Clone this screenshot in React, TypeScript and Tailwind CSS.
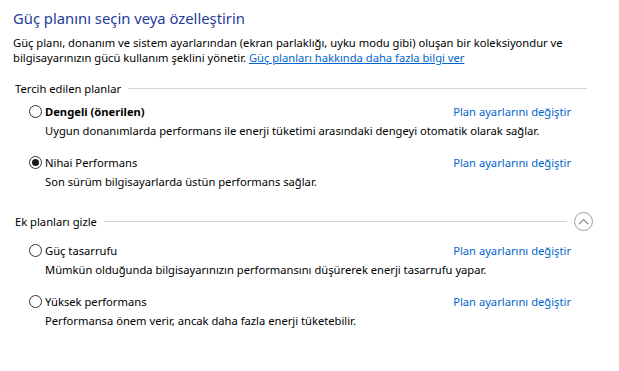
import React from 'react'

/* ── Radio ─────────────────────────────────────────────────── */
function Radio({ checked }: { checked?: boolean }) {
  return (
    <span className="flex h-[13px] w-[13px] shrink-0 items-center justify-center rounded-full border border-[#333] bg-white">
      {checked && <span className="h-[7px] w-[7px] rounded-full bg-[#1a1a1a]" />}
    </span>
  )
}

/* ── PlanRow ───────────────────────────────────────────────── */
function PlanRow({ name, desc, bold, checked }: { name: string; desc: string; bold?: boolean; checked?: boolean }) {
  return (
    <div className="pl-[16px]">
      <div className="flex h-[16px] items-center">
        <Radio checked={checked} />
        <span className={bold ? 'ml-[3px] font-bold' : 'ml-[3px]'}>{name}</span>
        <a className="ml-auto mr-[16px] cursor-pointer text-[#0066cc]">Plan ayarlarını değiştir</a>
      </div>
      <p className="mt-[4px] h-[16px] pl-[16px] leading-[16px]">{desc}</p>
    </div>
  )
}

/* ── SectionHeader ─────────────────────────────────────────── */
function SectionHeader({ title, collapse }: { title: string; collapse?: boolean }) {
  return (
    <div className="flex h-[18px] items-center pl-[2px]">
      <span>{title}</span>
      <span className="ml-[7px] h-px flex-1 bg-[#d4d4d4]" />
      {collapse && (
        <span className="-mr-[6px] ml-[7px] flex h-[19px] w-[19px] items-center justify-center rounded-full border border-[#a0a0a0]">
          <svg width="11" height="7" viewBox="0 0 11 7" fill="none">
            <path d="M1 6l4.5-4.5L10 6" stroke="#8a8a8a" strokeWidth="1.2" />
          </svg>
        </span>
      )}
    </div>
  )
}

export default function App() {
  return (
    <div
      className="h-[371px] w-[619px] bg-white pl-[13px] pr-[32px] pt-[8px] text-[11.2px] leading-[15px] text-black"
      style={{ fontFamily: '"Noto Sans", "Open Sans", sans-serif' }}
    >
      <h1 className="text-[14.8px] leading-[20px] text-[#1e3c9a]">Güç planını seçin veya özelleştirin</h1>
      <p className="mt-[7px]">
        Güç planı, donanım ve sistem ayarlarından (ekran parlaklığı, uyku modu gibi) oluşan bir koleksiyondur ve
        <br />
        bilgisayarınızın gücü kullanım şeklini yönetir.{' '}
        <a className="cursor-pointer text-[#0066cc] underline">Güç planları hakkında daha fazla bilgi ver</a>
      </p>

      <div className="mt-[14px]">
        <SectionHeader title="Tercih edilen planlar" />
      </div>
      <div className="mt-[6px] flex flex-col gap-[15px]">
        <PlanRow
          bold
          name="Dengeli (önerilen)"
          desc="Uygun donanımlarda performans ile enerji tüketimi arasındaki dengeyi otomatik olarak sağlar."
        />
        <PlanRow checked name="Nihai Performans" desc="Son sürüm bilgisayarlarda üstün performans sağlar." />
      </div>

      <div className="mt-[22px]">
        <SectionHeader title="Ek planları gizle" collapse />
      </div>
      <div className="mt-[12px] flex flex-col gap-[15px]">
        <PlanRow
          name="Güç tasarrufu"
          desc="Mümkün olduğunda bilgisayarınızın performansını düşürerek enerji tasarrufu yapar."
        />
        <PlanRow name="Yüksek performans" desc="Performansa önem verir, ancak daha fazla enerji tüketebilir." />
      </div>
    </div>
  )
}
